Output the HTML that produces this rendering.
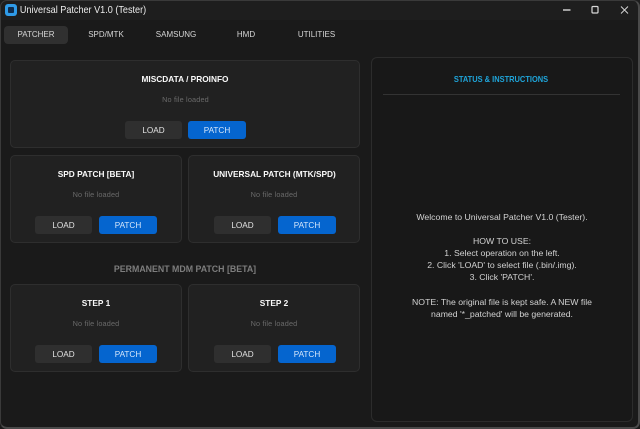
<!DOCTYPE html>
<html><head><meta charset="utf-8">
<style>
html,body{margin:0;padding:0;background:#111;}
#w{position:relative;width:640px;height:429px;overflow:hidden;background:#1a1a1a;font-family:"Liberation Sans",sans-serif;box-sizing:border-box;}
#w div,#w svg{position:absolute;box-sizing:border-box;}
.frame{left:0;top:0;width:640px;height:429px;border:1px solid #3a3a3a;border-right:2px solid #4a4a4a;border-bottom:2px solid #4a4a4a;border-radius:7px;z-index:5;pointer-events:none;}
.tb{left:0;top:0;width:640px;height:20px;background:#1e1e1e;}
.t{white-space:nowrap;text-align:center;transform:translateX(-50%);line-height:12px;}
.tab{font-size:8px;color:#d6d6d6;top:29px;}
.card{background:#212121;border:1px solid #2e2e2e;border-radius:5px;}
.h{font-size:8.3px;font-weight:bold;color:#fafafa;}
.n{font-size:7.3px;color:#6a6a6a;letter-spacing:.15px;}
.b{height:18px;border-radius:3px;font-size:8.2px;line-height:19px;text-align:center;width:58px;}
.l{background:#2f2f2f;color:#e2e2e2;width:57px;}
.p{background:#0565cf;color:#d5e6fa;}
.s{font-size:8.7px;color:#d2d2d2;}
</style></head><body>
<div id="w">
<div class="tb"></div>
<div style="left:5px;top:4px;width:12px;height:12px;border-radius:3px;background:#2f9be8;"></div>
<div style="left:8px;top:7px;width:6px;height:6px;border-radius:1px;background:#0f2c4d;"></div>
<div class="t" style="left:82.5px;top:5px;font-size:10.4px;color:#ececec;transform:translateX(-50%) scaleX(.875);">Universal Patcher V1.0 (Tester)</div>
<svg style="left:555px;top:3px" width="80" height="14" viewBox="0 0 80 14" fill="none" stroke="#d8d8d8">
<path d="M8 7H15.5" stroke-width="1.4"/>
<rect x="37" y="3.5" width="6" height="6.5" rx="1" stroke-width="1.2"/>
<path d="M66 3.5L73 10.5M73 3.5L66 10.5" stroke-width=".9"/>
</svg>

<div style="left:4px;top:26px;width:64px;height:18px;border-radius:4px;background:#303030;"></div>
<div class="t tab" style="left:36px;">PATCHER</div>
<div class="t tab" style="left:106px;">SPD/MTK</div>
<div class="t tab" style="left:176px;">SAMSUNG</div>
<div class="t tab" style="left:246px;">HMD</div>
<div class="t tab" style="left:316.5px;">UTILITIES</div>

<div class="card" style="left:10px;top:60px;width:350px;height:88px;"></div>
<div class="t h" style="left:185px;top:73px;">MISCDATA / PROINFO</div>
<div class="t n" style="left:185.5px;top:94px;">No file loaded</div>
<div class="b l" style="left:125px;top:121px;">LOAD</div>
<div class="b p" style="left:188px;top:121px;">PATCH</div>

<div class="card" style="left:10px;top:155px;width:172px;height:88px;"></div>
<div class="t h" style="left:96px;top:168px;">SPD PATCH [BETA]</div>
<div class="t n" style="left:96px;top:189px;">No file loaded</div>
<div class="b l" style="left:35px;top:216px;">LOAD</div>
<div class="b p" style="left:99px;top:216px;">PATCH</div>

<div class="card" style="left:188px;top:155px;width:172px;height:88px;"></div>
<div class="t h" style="left:274.5px;top:168px;">UNIVERSAL PATCH (MTK/SPD)</div>
<div class="t n" style="left:274px;top:189px;">No file loaded</div>
<div class="b l" style="left:214px;top:216px;">LOAD</div>
<div class="b p" style="left:278px;top:216px;">PATCH</div>

<div class="t" style="left:185px;top:263px;font-size:8.8px;font-weight:bold;color:#7d7d7d;">PERMANENT MDM PATCH [BETA]</div>

<div class="card" style="left:10px;top:284px;width:172px;height:88px;"></div>
<div class="t h" style="left:96px;top:297px;">STEP 1</div>
<div class="t n" style="left:96px;top:318px;">No file loaded</div>
<div class="b l" style="left:35px;top:345px;">LOAD</div>
<div class="b p" style="left:99px;top:345px;">PATCH</div>

<div class="card" style="left:188px;top:284px;width:172px;height:88px;"></div>
<div class="t h" style="left:274px;top:297px;">STEP 2</div>
<div class="t n" style="left:274px;top:318px;">No file loaded</div>
<div class="b l" style="left:214px;top:345px;">LOAD</div>
<div class="b p" style="left:278px;top:345px;">PATCH</div>

<div style="left:371px;top:57px;width:262px;height:365px;background:#181818;border:1px solid #2c2c2c;border-radius:6px;"></div>
<div class="t" style="left:501px;top:72.5px;font-size:8.3px;font-weight:bold;color:#1fa5da;transform:translateX(-50%) scaleX(.9);">STATUS &amp; INSTRUCTIONS</div>
<div style="left:383px;top:94px;width:237px;height:1px;background:#333;"></div>

<div class="t s" style="left:502px;top:211px;">Welcome to Universal Patcher V1.0 (Tester).</div>
<div class="t s" style="left:502px;top:235px;">HOW TO USE:</div>
<div class="t s" style="left:502px;top:247px;">1. Select operation on the left.</div>
<div class="t s" style="left:502px;top:259px;">2. Click 'LOAD' to select file (.bin/.img).</div>
<div class="t s" style="left:502px;top:271px;">3. Click 'PATCH'.</div>
<div class="t s" style="left:502px;top:296px;">NOTE: The original file is kept safe. A NEW file</div>
<div class="t s" style="left:502px;top:308px;">named '*_patched' will be generated.</div>
<div class="frame"></div>
</div>
</body></html>
